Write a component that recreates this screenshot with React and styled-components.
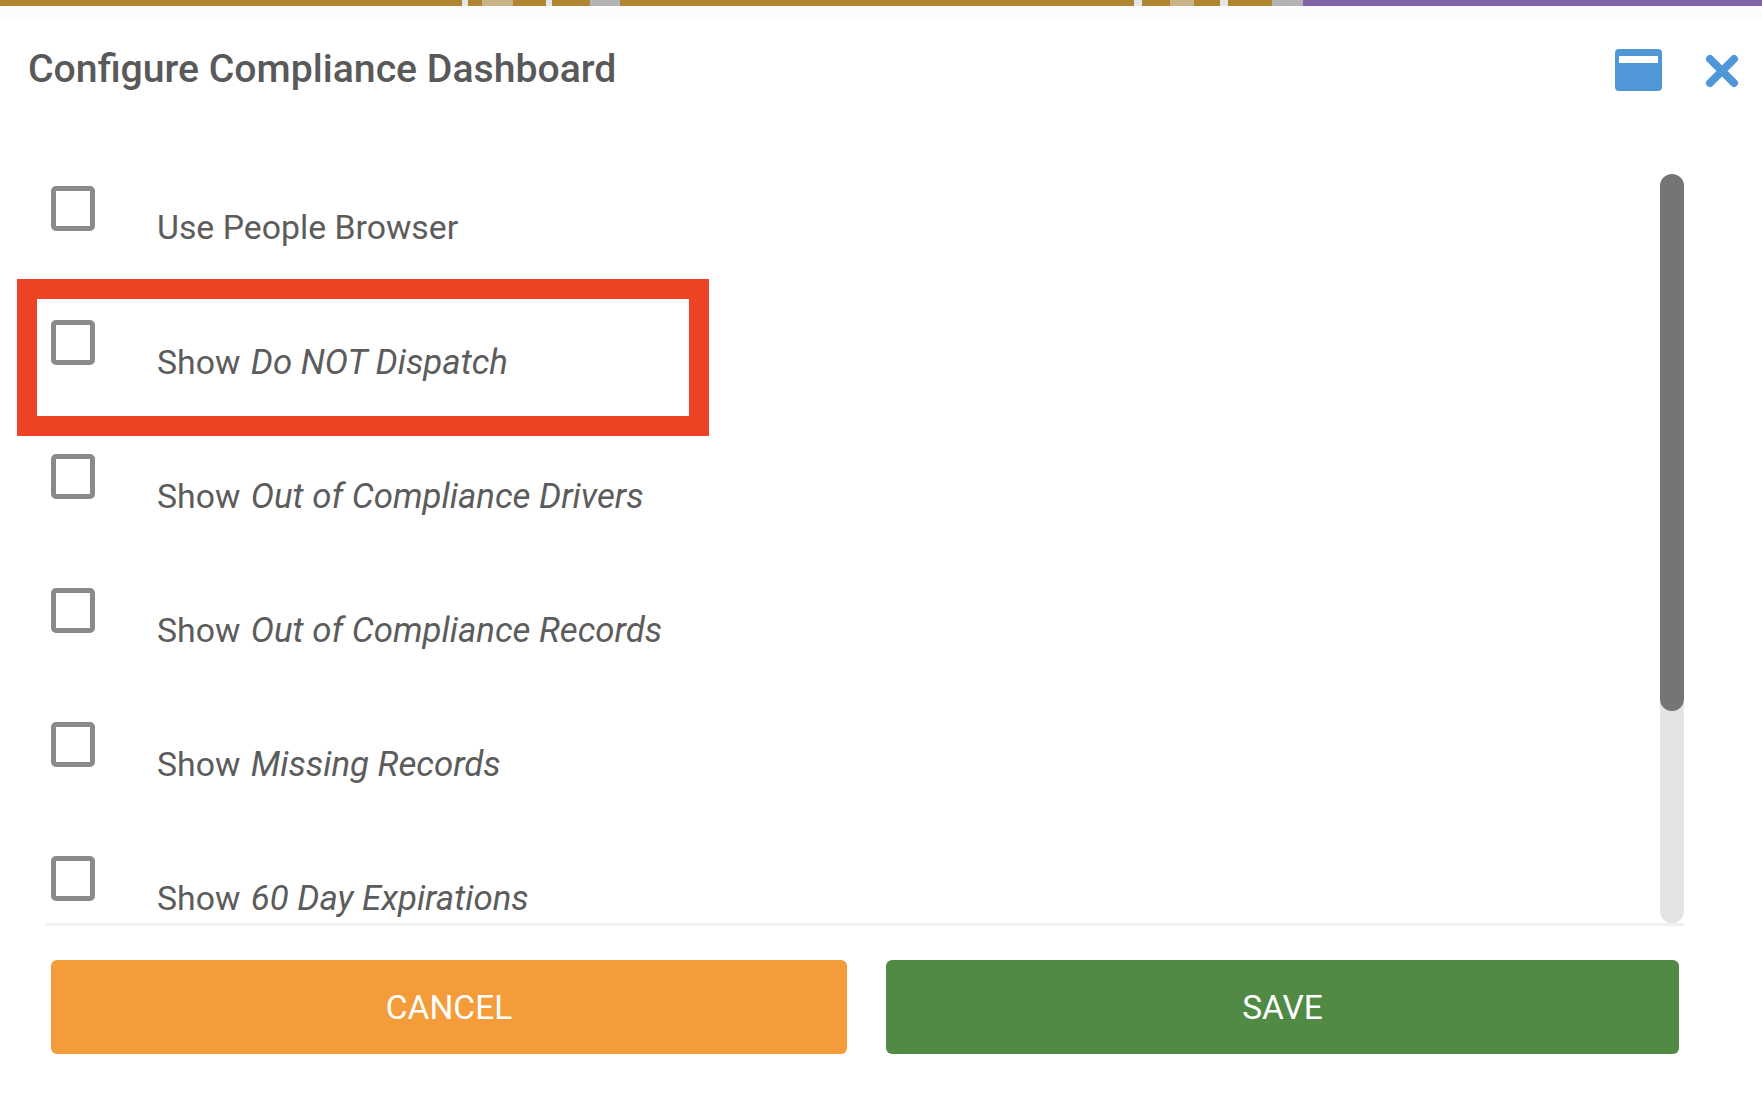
import React from "react";
import styled, { createGlobalStyle } from "styled-components";

const GlobalStyle = createGlobalStyle`
  html, body { margin: 0; padding: 0; background: #fff; }
  body { font-family: Roboto, "Liberation Sans", sans-serif; color: #555; }
`;

const Page = styled.div`
  width: 1762px;
  height: 1118px;
  overflow: hidden;
  display: flex;
  flex-direction: column;
`;

const Strip = styled.div`
  height: 6px;
  display: flex;
`;

const StripPart = styled.div`
  width: ${(p) => p.$w}px;
  flex: ${(p) => (p.$w ? "none" : 1)};
  background: ${(p) => p.$c};
`;

const Header = styled.div`
  height: 168px;
  display: flex;
  align-items: flex-start;
  background: linear-gradient(#fcfcfc 0, #fcfcfc 15px, #fff 15px);
  border-radius: 6px 6px 0 0;
`;

const Title = styled.h1`
  margin: 41px 0 0 28px;
  flex: 1;
  font-size: 39.2px;
  line-height: 44px;
  font-weight: 500;
  color: #595959;
`;

const IconButton = styled.div`
  margin-top: ${(p) => p.$top}px;
  margin-right: ${(p) => p.$right}px;
  line-height: 0;
`;

const Body = styled.div`
  height: 749px;
  margin: 0 78px 0 45px;
  display: flex;
  border-bottom: 3px solid #eef2f2;
`;

const List = styled.div`
  flex: 1;
  margin-left: -28px;
  padding: 12px 0 0 34px;
  overflow: hidden;
`;

const Row = styled.div`
  height: 134px;
  display: flex;
  align-items: flex-start;
  position: relative;
`;

const Check = styled.div`
  width: 44px;
  height: 45px;
  box-sizing: border-box;
  border: 5px solid #8a8a8a;
  border-radius: 5px;
  flex: none;
`;

const Label = styled.div`
  margin: 21px 0 0 62px;
  font-size: 33.8px;
  line-height: 42px;
  font-weight: 400;
  color: #5c5c5c;
  em { font-style: italic; font-size: 34.8px; margin-left: 2px; }
`;

const Highlight = styled.div`
  position: absolute;
  left: -34px;
  top: -41px;
  width: 692px;
  height: 157px;
  box-sizing: border-box;
  border: 20px solid #ee4225;
  pointer-events: none;
`;

const Track = styled.div`
  width: 24px;
  background: #e4e4e4;
  border-radius: 12px;
  flex: none;
`;

const Thumb = styled.div`
  height: 537px;
  background: #757575;
  border-radius: 12px;
`;

const Footer = styled.div`
  display: flex;
  margin: 34px 83px 0 51px;
  gap: 39px;
`;

const Button = styled.div`
  flex: none;
  width: ${(p) => p.$w}px;
  height: 94px;
  border-radius: 6px;
  background: ${(p) => p.$bg};
  color: #fff;
  font-size: 33.5px;
  font-weight: 400;
  display: flex;
  align-items: center;
  justify-content: center;
`;

const options = [
  { plain: "Use People Browser" },
  { plain: "Show ", em: "Do NOT Dispatch", marked: true },
  { plain: "Show ", em: "Out of Compliance Drivers" },
  { plain: "Show ", em: "Out of Compliance Records" },
  { plain: "Show ", em: "Missing Records" },
  { plain: "Show ", em: "60 Day Expirations" },
];

const stripParts = [
  { w: 462, c: "#b08530" },
  { w: 6, c: "#e6e6e6" },
  { w: 14, c: "#b08530" },
  { w: 31, c: "#c9b48a" },
  { w: 33, c: "#b08530" },
  { w: 6, c: "#e6e6e6" },
  { w: 38, c: "#b08530" },
  { w: 30, c: "#b3b3b3" },
  { w: 514, c: "#b08530" },
  { w: 8, c: "#e6e6e6" },
  { w: 28, c: "#b08530" },
  { w: 24, c: "#c9b48a" },
  { w: 26, c: "#b08530" },
  { w: 8, c: "#e6e6e6" },
  { w: 44, c: "#b08530" },
  { w: 31, c: "#b3b3b3" },
  { c: "#8064a5" },
];

const App = () => {
  return (
    <Page>
      <GlobalStyle />
      <Strip>
        {stripParts.map((s, i) => (
          <StripPart key={i} $w={s.w} $c={s.c} />
        ))}
      </Strip>
      <Header>
        <Title>Configure Compliance Dashboard</Title>
        <IconButton $top={43} $right={43}>
          <svg width="47" height="42" viewBox="0 0 47 42">
            <path
              fillRule="evenodd"
              fill="#5097d8"
              d="M4 0h39a4 4 0 0 1 4 4v34a4 4 0 0 1-4 4H4a4 4 0 0 1-4-4V4a4 4 0 0 1 4-4zM4 7v7h39V7z"
            />
          </svg>
        </IconButton>
        <IconButton $top={48} $right={23}>
          <svg width="34" height="34" viewBox="0 0 34 34">
            <path
              d="M5 5l24 24M29 5L5 29"
              stroke="#5097d8"
              strokeWidth="8"
              strokeLinecap="round"
              fill="none"
            />
          </svg>
        </IconButton>
      </Header>
      <Body>
        <List>
          {options.map((o, i) => (
            <Row key={i}>
              <Check />
              <Label>
                {o.plain}
                {o.em && <em>{o.em}</em>}
              </Label>
              {o.marked && <Highlight />}
            </Row>
          ))}
        </List>
        <Track>
          <Thumb />
        </Track>
      </Body>
      <Footer>
        <Button $w={796} $bg="#f39c39">CANCEL</Button>
        <Button $w={793} $bg="#508a45">SAVE</Button>
      </Footer>
    </Page>
  );
};

export default App;
